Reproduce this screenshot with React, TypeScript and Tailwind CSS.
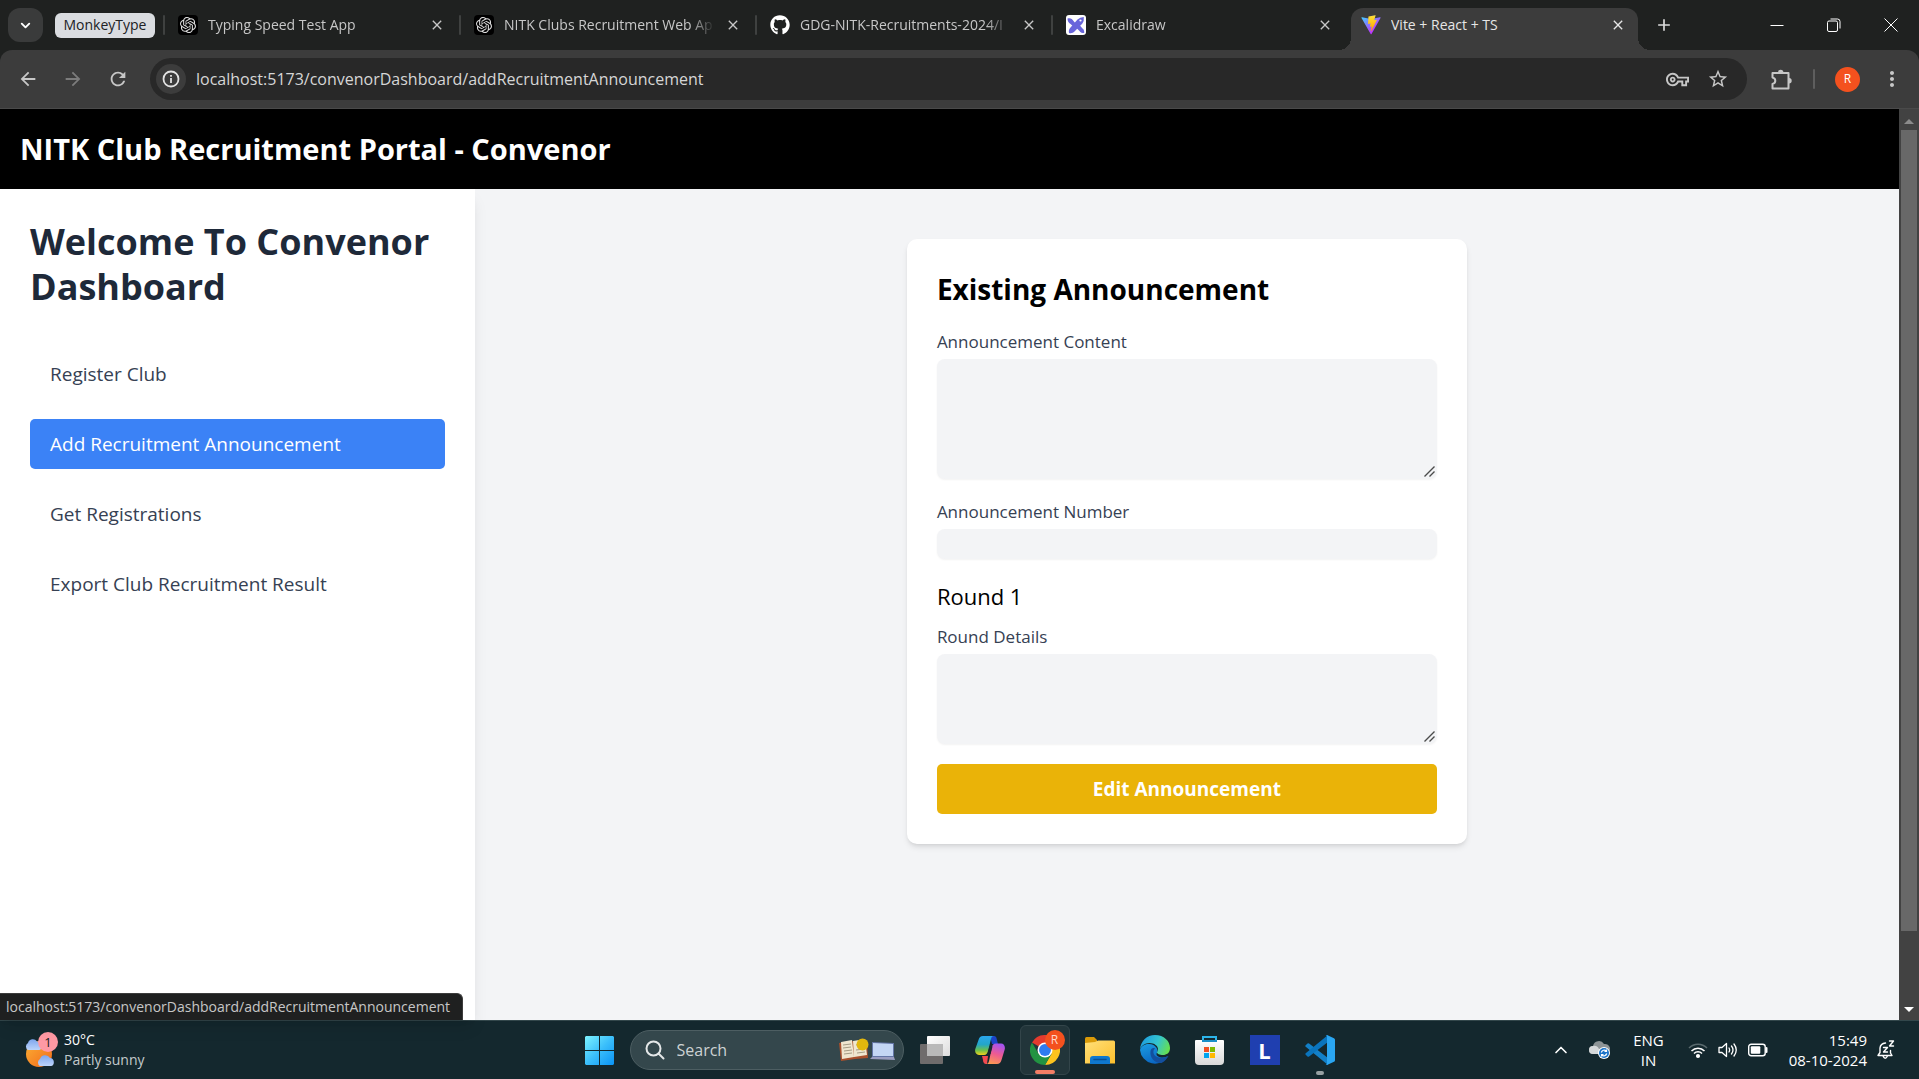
import type { ReactNode } from "react";
import { FaGithub } from "react-icons/fa";
import { SiOpenai } from "react-icons/si";
import {
  MdArrowBack,
  MdArrowForward,
  MdClose,
  MdMoreVert,
  MdAdd,
  MdOutlineVpnKey,
  MdRefresh,
  MdStarBorder,
} from "react-icons/md";
import { ChevronDown, ChevronUp } from "lucide-react";

/* ---------- Favicons ---------- */

function OpenAiIcon() {
  return (
    <span className="flex h-5 w-5 shrink-0 items-center justify-center rounded bg-black text-[#dedede]">
      <SiOpenai size={16} />
    </span>
  );
}

function ExcalidrawIcon() {
  return (
    <svg viewBox="0 0 20 20" className="h-5 w-5 shrink-0">
      <rect width="20" height="20" rx="3" fill="#fff" />
      <path d="M1.500 3.500c2.500-1 5 .2 6 2.500l3 3.500-2.500 2.500-3.500-3C2.500 8 1.500 6 1.500 3.500z" fill="#6965db" />
      <path d="M10.500 13l3-3 3 3.500c1.500 1 1.800 2.500 1.700 4.500-2 0-3.700-.3-4.700-2z" fill="#6965db" />
      <path d="M17.800 2q.6 4-1.600 6.800L8.500 16.500c-1.500 1.700-3.500 2-5.500 1.500-.5-2 0-4 1.500-5.500L11.500 4.500Q14 2 17.800 2z" fill="#6965db" />
      <circle cx="14.500" cy="5.500" r="1.100" fill="#fff" />
    </svg>
  );
}

function ViteIcon() {
  return (
    <svg viewBox="0 0 410 404" className="h-5 w-5 shrink-0">
      <defs>
        <linearGradient id="viteBody" x1="6" y1="33" x2="235" y2="344" gradientUnits="userSpaceOnUse">
          <stop stopColor="#41D1FF" />
          <stop offset="1" stopColor="#BD34FE" />
        </linearGradient>
        <linearGradient id="viteBolt" x1="194" y1="9" x2="236" y2="293" gradientUnits="userSpaceOnUse">
          <stop stopColor="#FFEA83" />
          <stop offset="0.080" stopColor="#FFDD35" />
          <stop offset="1" stopColor="#FFA800" />
        </linearGradient>
      </defs>
      <path
        d="M399.641 59.525L215.643 388.545C211.844 395.338 202.084 395.378 198.228 388.618L10.582 59.556C6.381 52.190 12.680 43.267 21.028 44.759L205.223 77.682C206.398 77.892 207.601 77.890 208.776 77.676L389.119 44.806C397.439 43.289 403.768 52.143 399.641 59.525Z"
        fill="url(#viteBody)"
      />
      <path
        d="M292.965 1.574L156.801 28.255C154.563 28.694 152.906 30.590 152.771 32.866L144.395 174.330C144.198 177.662 147.258 180.248 150.510 179.498L188.420 170.749C191.967 169.931 195.172 173.055 194.443 176.622L183.180 231.775C182.422 235.487 185.907 238.661 189.532 237.560L212.947 230.446C216.577 229.344 220.065 232.527 219.297 236.242L201.398 322.875C200.278 328.294 207.486 331.249 210.492 326.603L212.500 323.500L323.454 102.072C325.312 98.365 322.108 94.137 318.036 94.923L279.014 102.454C275.347 103.161 272.227 99.746 273.262 96.158L298.731 7.867C299.767 4.273 296.636 0.855 292.965 1.574Z"
        fill="url(#viteBolt)"
      />
    </svg>
  );
}

/* ---------- Browser chrome ---------- */

function TabLabel({ title, active = false }: { title: string; active?: boolean }) {
  return (
    <>
      <button
        role="tab"
        aria-selected={active}
        className={
          active
            ? "min-w-0 flex-1 overflow-hidden whitespace-nowrap text-left text-[#e6e6e6]"
            : "min-w-0 flex-1 overflow-hidden whitespace-nowrap text-left text-[#c7c7c7] [mask-image:linear-gradient(to_right,black_88%,transparent)]"
        }
      >
        {title}
      </button>
      <button aria-label={"Close " + title} className={active ? "text-[#e6e6e6]" : "text-[#c7c7c7]"}>
        <MdClose size={16} />
      </button>
    </>
  );
}

function Tab({ icon, title }: { icon: ReactNode; title: string }) {
  return (
    <div className="flex h-full min-w-0 max-w-[296px] flex-1 items-center gap-[10px] pr-[14px]">
      <span className="mr-[3px] h-5 w-[2px] shrink-0 rounded bg-[#3f4140]" />
      {icon}
      <TabLabel title={title} />
    </div>
  );
}

function TabStrip() {
  return (
    <div className="flex h-[50px] items-center bg-[#1f2120] text-sm">
      <button aria-label="Search tabs" className="ml-2 flex h-[34px] w-[35px] shrink-0 items-center justify-center rounded-xl bg-[#3a3b3b] text-white">
        <ChevronDown size={15} strokeWidth={3} />
      </button>
      <button className="ml-3 mr-2 h-[25px] w-[100px] shrink-0 rounded-md bg-[#dadce0] text-[#202124]">MonkeyType</button>
      <div role="tablist" className="flex h-full min-w-0 flex-1 items-center">
        <Tab icon={<OpenAiIcon />} title="Typing Speed Test App" />
        <Tab icon={<OpenAiIcon />} title="NITK Clubs Recruitment Web Ap" />
        <Tab icon={<FaGithub size={20} className="shrink-0 text-white" />} title="GDG-NITK-Recruitments-2024/I" />
        <Tab icon={<ExcalidrawIcon />} title="Excalidraw" />
        <div className="relative ml-1 flex h-[42px] w-[287px] shrink-0 items-center gap-[10px] self-end rounded-t-xl bg-[#3c3c3c] pb-2 pl-[10px] pr-3">
          <span className="absolute -left-3 bottom-0 h-3 w-3 bg-[radial-gradient(circle_at_0_0,#1f2120_12px,#3c3c3c_12px)]" />
          <span className="absolute -right-3 bottom-0 h-3 w-3 bg-[radial-gradient(circle_at_100%_0,#1f2120_12px,#3c3c3c_12px)]" />
          <ViteIcon />
          <TabLabel title="Vite + React + TS" active />
        </div>
        <button aria-label="New tab" className="ml-4 text-[#dcdcdc]">
          <MdAdd size={20} />
        </button>
      </div>
      <div className="flex text-white">
        <button aria-label="Minimize" className="flex w-[57px] justify-center">
          <svg viewBox="0 0 14 14" className="h-[14px] w-[14px]"><path d="M0.500 7.500h13" stroke="currentColor" /></svg>
        </button>
        <button aria-label="Restore" className="flex w-[57px] justify-center">
          <svg viewBox="0 0 14 14" className="h-[14px] w-[14px]" fill="none" stroke="currentColor">
            <rect x="0.500" y="3" width="10" height="10.500" rx="1.500" />
            <path d="M3.500 1h7a2.500 2.500 0 0 1 2.500 2.500v7" />
          </svg>
        </button>
        <button aria-label="Close window" className="flex w-[57px] justify-center">
          <svg viewBox="0 0 14 14" className="h-[14px] w-[14px]"><path d="M0.500 0.500l13 13M13.500 0.500l-13 13" stroke="currentColor" /></svg>
        </button>
      </div>
    </div>
  );
}

function PuzzleIcon() {
  return (
    <svg viewBox="0 0 21 21" className="h-[21px] w-[21px]" fill="none" stroke="currentColor" strokeWidth="2" strokeLinejoin="round">
      <path d="M1.500 4H17.500V19.500H1.500V15q2.800-.8 2.800-3.250T1.500 8.500z" />
      <path d="M7 3.500a2.700 2.700 0 0 1 5.400 0zM18 9a2.700 2.700 0 0 1 0 5.400z" fill="currentColor" stroke="none" />
    </svg>
  );
}

function Toolbar() {
  return (
    <div className="bg-[#1f2120]">
      <div className="flex h-[59px] items-center rounded-t-xl border-b border-[#4a4a4a] bg-[#3c3c3c] pl-[17px] text-[#c7c7c7]">
        <div className="flex w-[133px] gap-[23px]">
          <button aria-label="Back"><MdArrowBack size={22} /></button>
          <button aria-label="Forward" className="text-[#7c7c7c]"><MdArrowForward size={22} /></button>
          <button aria-label="Reload"><MdRefresh size={22} /></button>
        </div>
        <div className="flex h-[42px] min-w-0 flex-1 items-center rounded-full bg-[#282828] pl-[6px] pr-[18px]">
          <button aria-label="View site information" className="flex h-[30px] w-[30px] shrink-0 items-center justify-center rounded-full bg-[#3c3c3c]">
            <svg viewBox="0 0 18 18" className="h-[18px] w-[18px]" fill="none" stroke="#e3e3e3" strokeWidth="1.800">
              <circle cx="9" cy="9" r="7.500" />
              <path d="M9 8v5M9 5v1.800" />
            </svg>
          </button>
          <input
            aria-label="Address"
            defaultValue="localhost:5173/convenorDashboard/addRecruitmentAnnouncement"
            className="ml-[10px] min-w-0 flex-1 bg-transparent text-base text-[#d6d6d6] outline-none"
          />
          <button aria-label="Saved passwords" className="mr-[18px]"><MdOutlineVpnKey size={23} /></button>
          <button aria-label="Bookmark this page"><MdStarBorder size={22} /></button>
        </div>
        <button aria-label="Extensions" className="ml-6"><PuzzleIcon /></button>
        <span className="ml-[21px] h-5 w-[2px] rounded bg-[#5e5e5e]" />
        <button aria-label="Profile" className="ml-5 flex h-[25px] w-[25px] items-center justify-center rounded-full bg-[#f4511e] text-xs text-white">R</button>
        <button aria-label="Menu" className="ml-5 mr-[15px]"><MdMoreVert size={24} /></button>
      </div>
    </div>
  );
}

/* ---------- Page ---------- */

const links = ["Register Club", "Add Recruitment Announcement", "Get Registrations", "Export Club Recruitment Result"];

function Sidebar() {
  return (
    <aside className="z-10 w-1/4 shrink-0 bg-white p-[30px] shadow-lg">
      <h2 className="mb-10 text-4xl/[45px] font-bold text-gray-800">Welcome To Convenor Dashboard</h2>
      <nav className="flex flex-col gap-5 text-[19px]/[30px]">
        {links.map((label, i) => (
          <a
            key={label}
            href="#"
            className={i === 1 ? "rounded-[5px] bg-[#3b82f6] px-5 py-[10px] text-white" : "rounded-[5px] px-5 py-[10px] text-gray-700"}
          >
            {label}
          </a>
        ))}
      </nav>
    </aside>
  );
}

const labelClass = "mb-[5px] block text-[17px]/[25px] font-medium text-gray-700";
const fieldClass = "block w-full rounded-lg bg-gray-100 shadow-xs outline-none";

function TextArea({ id, className }: { id: string; className: string }) {
  return (
    <div className="relative mb-5">
      <textarea id={id} className={fieldClass + " resize-none " + className} />
      <svg viewBox="0 0 11 11" className="absolute bottom-[2px] right-[2px] h-[11px] w-[11px]" stroke="#4b4b4b" strokeWidth="1.400">
        <path d="M0.500 10.500l10-10M5.500 10.500l5-5" />
      </svg>
    </div>
  );
}

function AnnouncementCard() {
  return (
    <form className="w-[560px] rounded-[10px] bg-white p-[30px] shadow-md">
      <h2 className="mb-5 text-[28px]/[40px] font-bold text-black">Existing Announcement</h2>
      <label htmlFor="content" className={labelClass}>Announcement Content</label>
      <TextArea id="content" className="h-[120px]" />
      <label htmlFor="number" className={labelClass}>Announcement Number</label>
      <input id="number" type="text" className={fieldClass + " mb-5 h-[30px]"} />
      <h3 className="mb-[10px] text-[22px]/[35px] font-medium text-black">Round 1</h3>
      <label htmlFor="details" className={labelClass}>Round Details</label>
      <TextArea id="details" className="h-[90px]" />
      <button type="button" className="h-[50px] w-full rounded-[5px] bg-[#eab308] text-[19px] font-bold text-white">
        Edit Announcement
      </button>
    </form>
  );
}

function Scrollbar() {
  return (
    <div className="flex w-5 shrink-0 flex-col items-center bg-[#424242] py-2">
      <span className="mb-[6px] mt-[2px] border-x-[5px] border-b-[5px] border-x-transparent border-b-[#8b8b8b]" />
      <div className="w-4 flex-1"><div className="h-[92%] bg-[#686868]" /></div>
      <span className="mt-[6px] border-x-[5px] border-t-[5px] border-x-transparent border-t-white" />
    </div>
  );
}

function Page() {
  return (
    <div className="relative flex min-h-0 flex-1">
      <div className="flex min-w-0 flex-1 flex-col">
        <header className="bg-black p-5 text-[29px]/[40px] font-bold text-white">
          <h1>NITK Club Recruitment Portal - Convenor</h1>
        </header>
        <div className="flex min-h-0 flex-1 bg-gray-100">
          <Sidebar />
          <main className="flex flex-1 items-start justify-center pt-[50px]">
            <AnnouncementCard />
          </main>
        </div>
      </div>
      <Scrollbar />
      <div className="absolute bottom-0 left-0 z-20 h-[27px] rounded-tr-md border-t border-r border-[#3c3c3c] bg-[#1f2020] pl-[6px] pr-3 text-sm/[26px] text-[#c7c7c7]">
        localhost:5173/convenorDashboard/addRecruitmentAnnouncement
      </div>
    </div>
  );
}

/* ---------- Taskbar ---------- */

function WeatherIcon() {
  return (
    <svg viewBox="0 0 34 36" className="h-9 w-[34px]">
      <defs>
        <linearGradient id="sun" x1="0" y1="0" x2="1" y2="1"><stop stopColor="#fbb034" /><stop offset="1" stopColor="#f26a1b" /></linearGradient>
        <linearGradient id="cloud" x1="0" y1="0" x2="0" y2="1"><stop stopColor="#7ea6ee" /><stop offset="1" stopColor="#bcd4fb" /></linearGradient>
      </defs>
      <circle cx="15" cy="22" r="13" fill="url(#sun)" />
      <path d="M4 18a4 4 0 0 1 0-7 5 5 0 0 1 9-1.500c4 0 6 8.500 2 8.500z" fill="url(#cloud)" />
      <path d="M16 34a4 4 0 0 1 0-7 5.500 5.500 0 0 1 10-1c5 0 5 8 1 8z" fill="url(#cloud)" />
      <circle cx="24" cy="10" r="10" fill="#ff99a4" />
      <text x="24" y="15" textAnchor="middle" fontSize="13" fill="#202020">1</text>
    </svg>
  );
}

function WindowsIcon() {
  return (
    <svg viewBox="0 0 29 29" className="h-[29px] w-[29px]">
      <defs><linearGradient id="win" x1="0" y1="0" x2="29" y2="29" gradientUnits="userSpaceOnUse"><stop stopColor="#7df3ff" /><stop offset="0.500" stopColor="#3bbffb" /><stop offset="1" stopColor="#0a93f5" /></linearGradient></defs>
      <path d="M1 0h13v14H0V1zM15 0h13l1 1v13H15zM0 15h14v14H1l-1-1zM15 15h14v13l-1 1H15z" fill="url(#win)" />
    </svg>
  );
}

function SearchHighlight() {
  return (
    <svg viewBox="0 0 56 24" className="h-6 w-14">
      <path d="M0 5l14-2 14 0 1 17-13 1-14 2z" fill="#a8502c" />
      <path d="M2 4l11-2 2 17-12 2zM14 3l12-2 2 16-13 2z" fill="#efe6cf" />
      <path d="M4 7l8-1M4 10l8-1M5 13l8-1M5 16l8-1M17 7l7-1M17 12l8-1M18 15l8-1" stroke="#a59c84" />
      <circle cx="23.500" cy="6.500" r="6" fill="#e2b70d" />
      <path d="M33 4l22 1v14H33z" fill="#6475a6" />
      <path d="M34 5l20 1v12H34z" fill="#c4d6f4" />
      <path d="M33 19h22l1 3-25-1z" fill="#9a9dc0" />
    </svg>
  );
}

function TaskViewIcon() {
  return (
    <svg viewBox="0 0 30 28" className="h-7 w-[30px]">
      <defs><linearGradient id="tv" x1="0" y1="0" x2="1" y2="1"><stop stopColor="#fff" /><stop offset="1" stopColor="#dcdcdc" /></linearGradient></defs>
      <rect x="7" width="23" height="20" rx="1" fill="url(#tv)" />
      <rect y="8" width="23" height="20" rx="1" fill="#6f6c6c" />
      <path d="M7 8h16v12H7z" fill="#b9b9b9" />
    </svg>
  );
}

function CopilotIcon() {
  return (
    <svg viewBox="0 0 30 28" className="h-7 w-[30px]">
      <defs>
        <linearGradient id="cpA" x1="0" y1="0" x2="0" y2="1"><stop stopColor="#2aa7ee" /><stop offset="0.450" stopColor="#23a6c8" /><stop offset="0.750" stopColor="#6cc04a" /><stop offset="1" stopColor="#f1d21b" /></linearGradient>
        <linearGradient id="cpB" x1="0.600" y1="0" x2="0.300" y2="1"><stop stopColor="#a553f0" /><stop offset="0.500" stopColor="#ee5b91" /><stop offset="1" stopColor="#fb9a52" /></linearGradient>
      </defs>
      <path d="M15 0h4c2 0 2.500 2 3 4l1 4h-6z" fill="#1b44c8" />
      <path d="M7 20h6l-1 8h-1c-2 0-3-2-3-4z" fill="#f04a50" />
      <path d="M8 0h11c-2 0-2.500 1-3 3l-3 12c-.6 2-1.500 4-4 4H4c-3 0-4.500-3-3.700-6L3.500 4C4.300 1.200 5.500 0 8 0z" fill="url(#cpA)" />
      <path d="M22 28H11c2 0 2.500-1 3-3l3-14c.6-2 1.500-3.500 4-3.500h5c3 0 4.500 3 3.700 6l-3.200 10.500c-.8 2.800-2 4-4.500 4z" fill="url(#cpB)" />
      <path d="M14.500 10.500l3 0-2 7.500h-3z" fill="#14282e" />
    </svg>
  );
}

function ChromeIcon() {
  return (
    <svg viewBox="0 0 48 48" className="h-[30px] w-[30px]">
      <path d="M24 24L3.200 12A24 24 0 0 1 44.800 12z" fill="#e33b2e" />
      <path d="M24 12h20.800A24 24 0 0 1 24 48l10.400-18z" fill="#fcc31e" />
      <path d="M3.200 12L13.600 30 24 36h4L24 48A24 24 0 0 1 3.200 12z" fill="#229342" />
      <path d="M34.400 30L24 48l-4-12z" fill="#229342" />
      <circle cx="24" cy="24" r="12" fill="#fff" />
      <circle cx="24" cy="24" r="9.500" fill="#2f7bf0" />
    </svg>
  );
}

function ExplorerIcon() {
  return (
    <svg viewBox="0 0 30 27" className="h-[27px] w-[30px]">
      <defs><linearGradient id="folder" x1="0" y1="0" x2="1" y2="1"><stop stopColor="#ffe07a" /><stop offset="1" stopColor="#fcbf2c" /></linearGradient></defs>
      <path d="M0 1.500Q0 0 1.500 0H9l3 3v5H0z" fill="#d99a08" />
      <path d="M0 6l10-1 3-1.500h15.500Q30 3.500 30 5v21.500H0z" fill="url(#folder)" />
      <path d="M5 27v-5q0-3 3-3h14q3 0 3 3v5z" fill="#0f78cf" />
      <path d="M9 22.500h12" stroke="#0a4f94" strokeWidth="1.500" strokeLinecap="round" />
    </svg>
  );
}

function EdgeIcon() {
  return (
    <svg viewBox="0 0 30 30" className="h-[30px] w-[30px]">
      <defs>
        <linearGradient id="edgeTop" x1="0" y1="0.300" x2="1" y2="0.600"><stop stopColor="#1c9be0" /><stop offset="0.550" stopColor="#34c5cf" /><stop offset="1" stopColor="#66e04f" /></linearGradient>
        <linearGradient id="edgeLeft" x1="0" y1="0" x2="0.500" y2="1"><stop stopColor="#1b9de2" /><stop offset="1" stopColor="#0a66c2" /></linearGradient>
      </defs>
      <path d="M0 15c1-4 5-6.500 9.500-6 5 .5 8 3.500 8 7 0 1.500-1 2-1 3 0 2 3 3.500 6 3.500 2.500 0 4.500-1 5.500-1.500A15 15 0 0 1 0 15z" fill="url(#edgeLeft)" />
      <path d="M10.500 16c-1 7 4.500 12.500 11 12 3-1 5.500-4.500 7-7-8 4-16 1-15-5 .3-1.500 1-2 1.500-2.500-2-1-4 0-4.500 2.500z" fill="#134f9e" />
      <path d="M0 14.500C.5 6 7 0 15 0c9 0 15 6 15 13 0 5-3.500 7-7 7-3.500 0-6-1.500-6-2.500 0-.7 1-1.500 1-3.500 0-3-3.500-6-8.500-6C4.500 8 1 11 0 14.500z" fill="url(#edgeTop)" />
    </svg>
  );
}

function StoreIcon() {
  return (
    <svg viewBox="0 0 29 29" className="h-[29px] w-[29px]">
      <defs><linearGradient id="bag" x1="0" y1="0" x2="0" y2="1"><stop stopColor="#fff" /><stop offset="1" stopColor="#d9d9d9" /></linearGradient></defs>
      <path d="M8 6V1h13v5" fill="none" stroke="#2cb5ea" strokeWidth="2" />
      <path d="M0 5q0-1 1-1h27q1 0 1 1v20q0 4-4 4H4q-4 0-4-4z" fill="url(#bag)" />
      <path d="M7 4h15v2H7z" fill="#1a8fc8" />
      <path d="M9 11h5v5H9z" fill="#f25022" />
      <path d="M15 11h5v5h-5z" fill="#7fba00" />
      <path d="M9 17h5v5H9z" fill="#00a4ef" />
      <path d="M15 17h5v5h-5z" fill="#ffb900" />
    </svg>
  );
}

function VsCodeIcon() {
  return (
    <svg viewBox="0 0 30 30" className="h-[30px] w-[30px]">
      <path d="M0.700 10.300L2.500 8.500q.8-.5 1.600 0L23 23v7L.7 11.800q-.8-.8 0-1.500z" fill="#1380c8" />
      <path d="M0.700 19.700L2.500 21.500q.8.500 1.600 0L23 7V0L.7 18.200q-.8.800 0 1.500z" fill="#0a74bd" />
      <path d="M22 0l7 3.200q1 .5 1 1.500v20.600q0 1-1 1.500L22 30q-.8 0-1.300-.5Q22 30 22 28V2q0-2-1.300-1.500Q21 0 22 0z" fill="#2aa6f2" />
    </svg>
  );
}

function AppButton({ label, children }: { label: string; children: ReactNode }) {
  return <button aria-label={label} className="flex h-[30px] w-[30px] items-center justify-center">{children}</button>;
}

function CloudSyncIcon() {
  return (
    <svg viewBox="0 0 22 20" className="h-5 w-[22px]">
      <path d="M4 14a4 4 0 0 1 0-8 6 6 0 0 1 11-2 5 5 0 0 1 2 10z" fill="#8d9496" />
      <path d="M4 14a4 4 0 0 1 0-8q4-1 6 3l5 5z" fill="#d5d8d9" />
      <circle cx="15" cy="13" r="6" fill="#fff" />
      <circle cx="15" cy="13" r="5" fill="#1a73c9" />
      <path d="M12.300 12.500a3 3 0 0 1 5-1.500M17.700 13.500a3 3 0 0 1-5 1.500M17.500 9.500V11.500h-2M12.500 16.500v-2h2" fill="none" stroke="#fff" strokeWidth="1.200" />
    </svg>
  );
}

function WifiIcon() {
  return (
    <svg viewBox="0 0 20 18" className="h-[18px] w-5" fill="none" stroke="#fff" strokeWidth="1.500">
      <path d="M1 7a12.500 12.500 0 0 1 18 0" stroke="#5a6a6e" />
      <path d="M3.500 10a9 9 0 0 1 13 0M6 12.500a5.600 5.600 0 0 1 8 0" />
      <circle cx="10" cy="15" r="1.300" fill="#fff" />
    </svg>
  );
}

function VolumeIcon() {
  return (
    <svg viewBox="0 0 20 18" className="h-[18px] w-5" fill="none" stroke="#fff" strokeWidth="1.300" strokeLinejoin="round">
      <path d="M1 6.500h3l4.500-4v13l-4.500-4H1z" />
      <path d="M11 7q1.300 2 0 4M13.500 5q3 4 0 8M16 3q4.500 6 0 12" strokeLinecap="round" />
    </svg>
  );
}

function BatteryIcon() {
  return (
    <svg viewBox="0 0 20 14" className="h-[14px] w-5">
      <rect x="0.700" y="1.200" width="16.500" height="11.600" rx="2.500" fill="none" stroke="#fff" strokeWidth="1.400" />
      <rect x="2.800" y="3.300" width="9.500" height="7.400" rx="1" fill="#fff" />
      <path d="M18.500 5v4" stroke="#fff" strokeWidth="2" strokeLinecap="round" />
    </svg>
  );
}

function BellIcon() {
  return (
    <svg viewBox="0 0 18 20" className="h-5 w-[18px]" fill="none" stroke="#fff" strokeWidth="1.400" strokeLinecap="round" strokeLinejoin="round">
      <path d="M8.500 3Q3.500 3.500 3 8v4.500L1 15.500h14L13.500 13v-2.500M6 16q2 4.500 4.500 0M6.500 7.500h4l-4 4.500h4M12.500 1h4l-4 5h4" />
    </svg>
  );
}

function Taskbar() {
  return (
    <footer className="grid h-[59px] shrink-0 grid-cols-[1fr_auto_1fr] items-center border-t border-[#33474b] bg-[#14282e] text-white">
      <button className="ml-6 flex items-center gap-[6px] justify-self-start text-left text-sm/5">
        <WeatherIcon />
        <span className="block">
          <span className="block">30°C</span>
          <span className="block text-[#c3cacc]">Partly sunny</span>
        </span>
      </button>

      <div className="flex items-center gap-[25px]">
        <div className="flex items-center gap-4">
          <button aria-label="Start"><WindowsIcon /></button>
          <label className="flex h-10 w-[274px] items-center gap-3 rounded-full border border-[#4d5e62] bg-[#34474c] pl-[14px] pr-2">
            <svg viewBox="0 0 20 20" className="h-5 w-5 shrink-0" fill="none" stroke="#e4e7e8" strokeWidth="2" strokeLinecap="round">
              <circle cx="8.500" cy="8.500" r="7" />
              <path d="M13.500 13.500l5 5" />
            </svg>
            <input aria-label="Search" placeholder="Search" className="min-w-0 flex-1 bg-transparent text-base outline-none placeholder:text-[#cdd2d3]" />
            <SearchHighlight />
          </label>
          <AppButton label="Task view"><TaskViewIcon /></AppButton>
        </div>
        <AppButton label="Copilot"><CopilotIcon /></AppButton>
        <button aria-label="Chrome" className="relative -mx-[10px] flex h-[50px] w-[50px] items-center justify-center rounded-md border border-[#33454a] bg-[#22353a]">
          <ChromeIcon />
          <span className="absolute right-1 top-1 flex h-5 w-5 items-center justify-center rounded-full bg-[#f4511e] text-xs text-[#ffd9cc]">R</span>
          <span className="absolute bottom-0 h-1 w-5 rounded-full bg-[#f37e66]" />
        </button>
        <AppButton label="File Explorer"><ExplorerIcon /></AppButton>
        <AppButton label="Edge"><EdgeIcon /></AppButton>
        <AppButton label="Microsoft Store"><StoreIcon /></AppButton>
        <button aria-label="L app" className="flex h-[30px] w-[30px] items-center justify-center bg-[#1f3fb0] text-[22px] font-bold">L</button>
        <button aria-label="Visual Studio Code" className="relative flex h-[50px] w-[30px] items-center justify-center">
          <VsCodeIcon />
          <span className="absolute bottom-0 h-1 w-2 rounded-full bg-[#98a1a3]" />
        </button>
      </div>

      <div className="flex items-center justify-self-end text-[15px]/5">
        <button aria-label="Hidden icons" className="mr-[18px]"><ChevronUp size={20} strokeWidth={2} /></button>
        <button aria-label="OneDrive" className="mr-[22px]"><CloudSyncIcon /></button>
        <button className="mr-6 text-center">ENG<br />IN</button>
        <button aria-label="Network, volume and battery" className="mr-[21px] flex items-center gap-[10px]">
          <WifiIcon /><VolumeIcon /><BatteryIcon />
        </button>
        <button className="mr-[10px] text-right">15:49<br />08-10-2024</button>
        <button aria-label="Notifications" className="mr-6"><BellIcon /></button>
      </div>
    </footer>
  );
}

export default function App() {
  return (
    <div className="flex h-screen flex-col overflow-hidden font-['Open_Sans',sans-serif]">
      <TabStrip />
      <Toolbar />
      <Page />
      <Taskbar />
    </div>
  );
}
